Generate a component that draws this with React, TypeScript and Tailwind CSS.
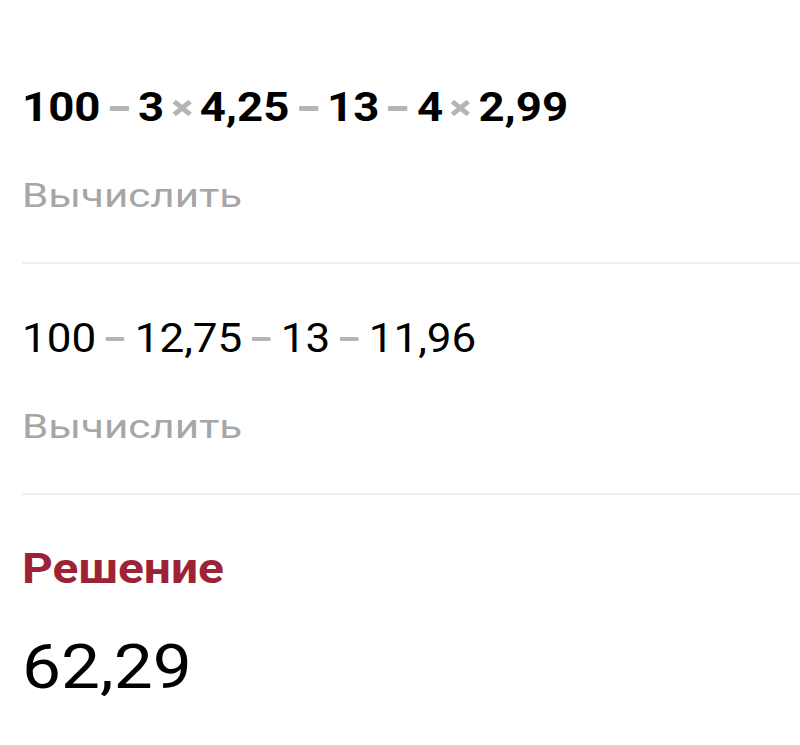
const font = { fontFamily: 'Roboto, "Noto Sans", sans-serif' };

function Minus({ bold }: { bold?: boolean }) {
  return (
    <span
      className={`inline-block w-[17px] rounded-[1px] bg-[#b5b5b5] ${bold ? 'mx-[8px] h-[5px]' : 'mx-[9px] h-[4px]'}`}
    />
  );
}

function Times() {
  return (
    <svg className="mx-[6px]" width="19" height="16" viewBox="0 0 19 16">
      <path d="M2.5 1.5 L16.5 14.5 M16.5 1.5 L2.5 14.5" stroke="#b5b5b5" strokeWidth="4.5" />
    </svg>
  );
}

function Expr({ parts, bold }: { parts: string[]; bold?: boolean }) {
  return (
    <div
      className={`flex w-fit origin-left items-center text-[40px] leading-[48px] text-black ${bold ? 'scale-x-[1.14] font-bold' : 'scale-x-[1.1] font-normal'}`}
    >
      {parts.map((p, i) =>
        p === '-' ? <Minus key={i} bold={bold} /> : p === 'x' ? <Times key={i} /> : <span key={i}>{p}</span>
      )}
    </div>
  );
}

function Block({ parts, bold, top }: { parts: string[]; bold?: boolean; top: string }) {
  return (
    <div className={`border-b-2 border-[#f0f0f0] pb-[47px] ${top}`}>
      <Expr parts={parts} bold={bold} />
      <div className="mt-[43px] w-fit origin-left scale-x-[1.24] text-[34px] leading-[40px] text-[#a6a6a6]">
        Вычислить
      </div>
    </div>
  );
}

export default function App() {
  return (
    <div className="h-[745px] w-[800px] overflow-hidden bg-white pl-[22px] pt-[84px]" style={font}>
      <Block parts={['100', '-', '3', 'x', '4,25', '-', '13', '-', '4', 'x', '2,99']} bold top="" />
      <Block parts={['100', '-', '12,75', '-', '13', '-', '11,96']} top="mt-[51px]" />
      <div className="mt-[50px] w-fit origin-left scale-x-[1.14] text-[42px] font-bold leading-[48px] text-[#9c2336]">
        Решение
      </div>
      <div className="mt-[38px] w-fit origin-left scale-x-[1.12] text-[62px] leading-[72px] text-black">62,29</div>
    </div>
  );
}
